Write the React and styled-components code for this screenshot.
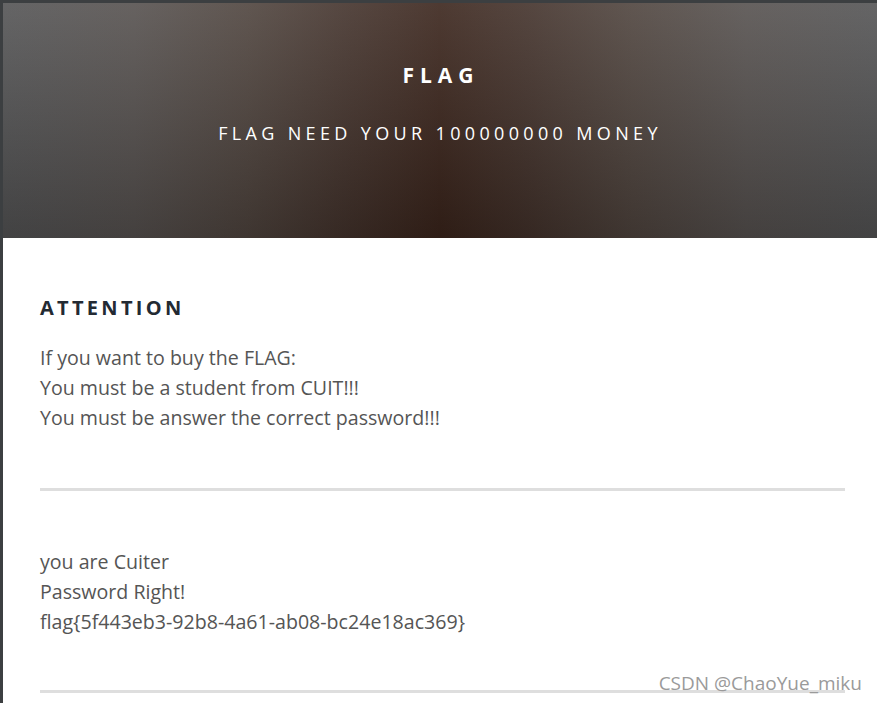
import React from "react";
import styled, { createGlobalStyle } from "styled-components";

const GlobalStyle = createGlobalStyle`
  html, body {
    margin: 0;
    padding: 0;
    background: #ffffff;
  }
  body {
    font-family: "Open Sans", "DejaVu Sans", sans-serif;
  }
`;

const Frame = styled.div`
  position: relative;
  min-height: 703px;
  box-sizing: border-box;
  border-top: 3px solid #3c3f41;
  border-left: 3px solid #3c3f41;
  background: #ffffff;
  overflow: hidden;
`;

const Header = styled.header`
  height: 235px;
  box-sizing: border-box;
  padding-top: 57px;
  display: flex;
  flex-direction: column;
  align-items: center;
  background:
    linear-gradient(to bottom, rgba(255, 255, 255, 0.1), rgba(0, 0, 0, 0.2)),
    linear-gradient(
      to right,
      #535354 0%,
      #55504e 15%,
      #4e433d 28%,
      #42312a 40%,
      #3a241b 50%,
      #42312a 60%,
      #4e433d 72%,
      #55504e 85%,
      #535354 100%
    );
  color: #ffffff;
`;

const Title = styled.h1`
  margin: 0;
  font-size: 21px;
  line-height: 30px;
  font-weight: 700;
  letter-spacing: 6px;
  padding-left: 2px;
`;

const Subtitle = styled.h2`
  margin: 28px 0 0;
  font-size: 18px;
  line-height: 30px;
  font-weight: 400;
  letter-spacing: 4.35px;
`;

const Content = styled.main`
  padding: 55px 32px 0 37px;
`;

const Heading = styled.h3`
  margin: 0 0 20px;
  font-size: 20px;
  line-height: 30px;
  font-weight: 700;
  letter-spacing: 3.3px;
  color: #232a33;
`;

const Text = styled.p`
  margin: 0;
  font-size: 19.6px;
  line-height: 30px;
  color: #555555;
`;

const Divider = styled.hr`
  margin: ${(p) => p.$top}px 0 0;
  border: none;
  height: 3px;
  background: #dedede;
`;

const Result = styled(Text)`
  margin-top: 56px;
`;

const Watermark = styled.div`
  position: absolute;
  right: 15px;
  bottom: 8px;
  font-size: 19px;
  line-height: 24px;
  color: #9a9a9a;
`;

function App() {
  return (
    <Frame>
      <GlobalStyle />
      <Header>
        <Title>FLAG</Title>
        <Subtitle>FLAG NEED YOUR 100000000 MONEY</Subtitle>
      </Header>
      <Content>
        <Heading>ATTENTION</Heading>
        <Text>
          If you want to buy the FLAG:
          <br />
          You must be a student from CUIT!!!
          <br />
          You must be answer the correct password!!!
        </Text>
        <Divider $top={55} />
        <Result>
          you are Cuiter
          <br />
          Password Right!
          <br />
          flag{"{5f443eb3-92b8-4a61-ab08-bc24e18ac369}"}
        </Result>
        <Divider $top={53} />
      </Content>
      <Watermark>CSDN @ChaoYue_miku</Watermark>
    </Frame>
  );
}

export default App;
